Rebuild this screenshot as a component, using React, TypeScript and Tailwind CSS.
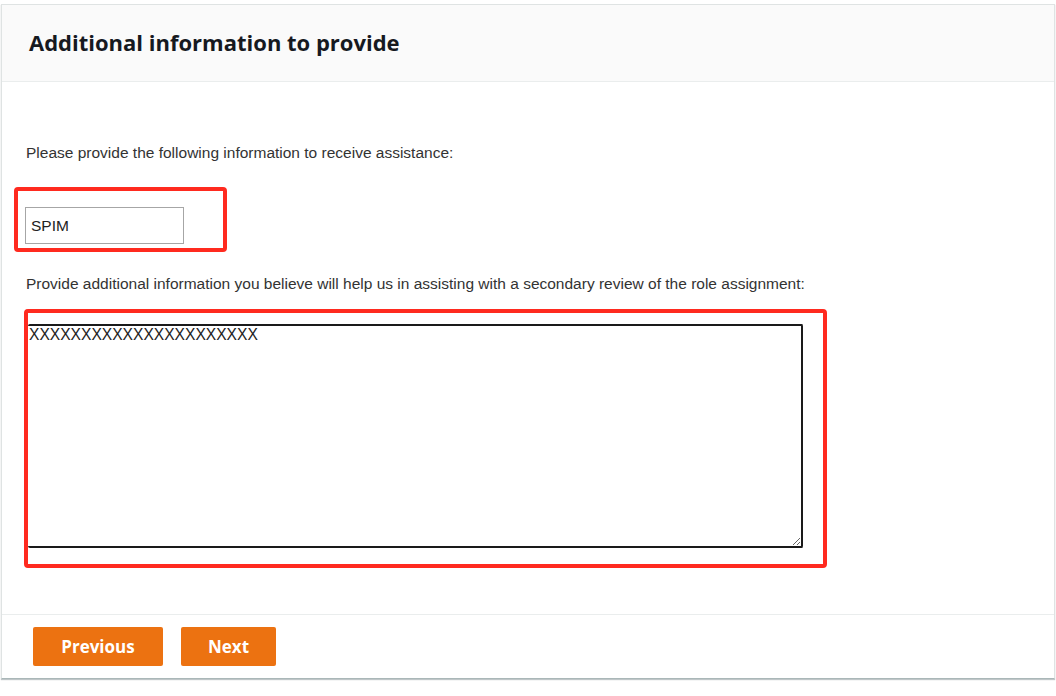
export default function App() {
  return (
    <div className="min-h-screen bg-white pt-[4px] pl-[1px]">
      <div className="w-[1054px] border border-[#dfe3e3] border-b-[#aab7b8] shadow-[0_1px_1px_rgba(0,28,36,0.25)]">
        <div className="h-[77px] bg-[#fafafa] border-b border-[#eaeded] pl-[27px] pt-[23px]">
          <h2 className="text-[22px] leading-[28px] font-bold text-[#16191f] font-['Open_Sans',sans-serif]">
            Additional information to provide
          </h2>
        </div>

        <div className="h-[532px] pl-[24px] font-['Liberation_Sans',Arial,sans-serif]">
          <p className="pt-[62px] text-[15.5px] leading-[18px] text-[#333]">
            Please provide the following information to receive assistance:
          </p>
          <div className="mt-[25px] ml-[-12px] w-[213px] h-[65px] border-4 border-[#ff2a1f] rounded-[4px] pl-[7px] pt-[16px]">
            <input
              defaultValue="SPIM"
              className="w-[159px] h-[37px] border border-[#a6a6a6] px-[5px] text-[15.5px] text-[#222] outline-none"
            />
          </div>
          <p className="mt-[23px] text-[15.5px] leading-[18px] text-[#333]">
            Provide additional information you believe will help us in assisting with a secondary review of the role assignment:
          </p>
          <div className="mt-[16px] ml-[-2px] w-[803px] h-[259px] border-4 border-[#ff2a1f] rounded-[4px] pt-[11px]">
            <textarea
              defaultValue="XXXXXXXXXXXXXXXXXXXXXX"
              className="block w-[775px] h-[224px] border-2 border-l-0 border-[#1a1a1a] rounded-[2px] pl-px pt-0 text-[15.6px] leading-[18px] text-[#222] outline-none"
            />
          </div>
        </div>

        <div className="border-t border-[#eaeded] pl-[31px] py-[12px] flex gap-[18px] font-['Open_Sans',sans-serif]">
          <button className="w-[130px] h-[39px] bg-[#ec7211] rounded-[2px] text-white text-[17px] font-bold">
            Previous
          </button>
          <button className="w-[95px] h-[39px] bg-[#ec7211] rounded-[2px] text-white text-[17px] font-bold">
            Next
          </button>
        </div>
      </div>
    </div>
  );
}
